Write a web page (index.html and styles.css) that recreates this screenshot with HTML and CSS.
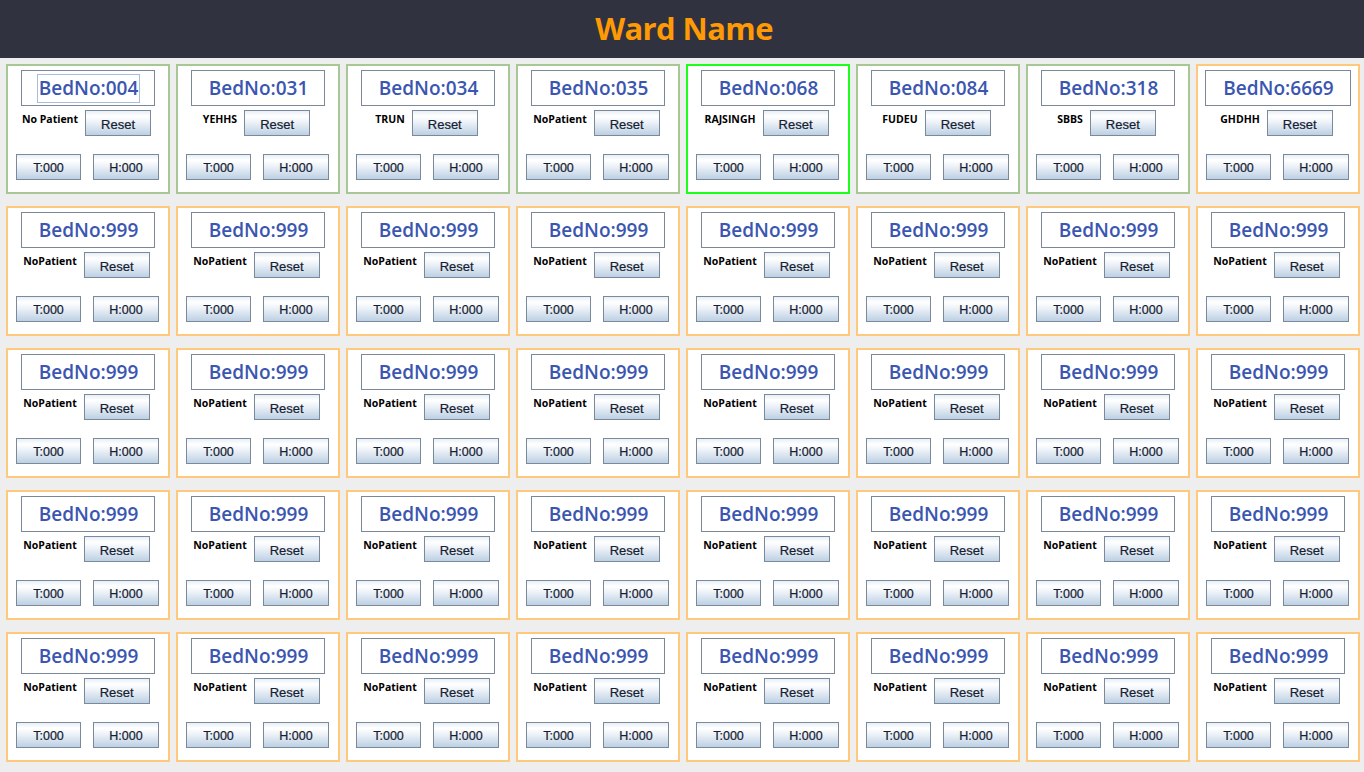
FILE: index.html
```html
<!DOCTYPE html>
<html>
<head>
<meta charset="utf-8">
<title>Ward Name</title>
<link rel="stylesheet" href="styles.css">
</head>
<body>
<header class="topbar"><h1 class="ward-title">Ward Name</h1></header>
<main class="grid">
  <div class="card ok"><div class="bed"><span class="bed-text focus">BedNo:004</span></div><div class="mid"><span class="patient">No Patient</span><button class="btn reset">Reset</button></div><div class="bottom"><button class="btn t">T:000</button><button class="btn h">H:000</button></div></div>
  <div class="card ok"><div class="bed"><span class="bed-text">BedNo:031</span></div><div class="mid"><span class="patient">YEHHS</span><button class="btn reset">Reset</button></div><div class="bottom"><button class="btn t">T:000</button><button class="btn h">H:000</button></div></div>
  <div class="card ok"><div class="bed"><span class="bed-text">BedNo:034</span></div><div class="mid"><span class="patient">TRUN</span><button class="btn reset">Reset</button></div><div class="bottom"><button class="btn t">T:000</button><button class="btn h">H:000</button></div></div>
  <div class="card ok"><div class="bed"><span class="bed-text">BedNo:035</span></div><div class="mid"><span class="patient">NoPatient</span><button class="btn reset">Reset</button></div><div class="bottom"><button class="btn t">T:000</button><button class="btn h">H:000</button></div></div>
  <div class="card active"><div class="bed"><span class="bed-text">BedNo:068</span></div><div class="mid"><span class="patient">RAJSINGH</span><button class="btn reset">Reset</button></div><div class="bottom"><button class="btn t">T:000</button><button class="btn h">H:000</button></div></div>
  <div class="card ok"><div class="bed"><span class="bed-text">BedNo:084</span></div><div class="mid"><span class="patient">FUDEU</span><button class="btn reset">Reset</button></div><div class="bottom"><button class="btn t">T:000</button><button class="btn h">H:000</button></div></div>
  <div class="card ok"><div class="bed"><span class="bed-text">BedNo:318</span></div><div class="mid"><span class="patient">SBBS</span><button class="btn reset">Reset</button></div><div class="bottom"><button class="btn t">T:000</button><button class="btn h">H:000</button></div></div>
  <div class="card warn"><div class="bed"><span class="bed-text">BedNo:6669</span></div><div class="mid"><span class="patient">GHDHH</span><button class="btn reset">Reset</button></div><div class="bottom"><button class="btn t">T:000</button><button class="btn h">H:000</button></div></div>

  <div class="card warn"><div class="bed"><span class="bed-text">BedNo:999</span></div><div class="mid"><span class="patient">NoPatient</span><button class="btn reset">Reset</button></div><div class="bottom"><button class="btn t">T:000</button><button class="btn h">H:000</button></div></div>
  <div class="card warn"><div class="bed"><span class="bed-text">BedNo:999</span></div><div class="mid"><span class="patient">NoPatient</span><button class="btn reset">Reset</button></div><div class="bottom"><button class="btn t">T:000</button><button class="btn h">H:000</button></div></div>
  <div class="card warn"><div class="bed"><span class="bed-text">BedNo:999</span></div><div class="mid"><span class="patient">NoPatient</span><button class="btn reset">Reset</button></div><div class="bottom"><button class="btn t">T:000</button><button class="btn h">H:000</button></div></div>
  <div class="card warn"><div class="bed"><span class="bed-text">BedNo:999</span></div><div class="mid"><span class="patient">NoPatient</span><button class="btn reset">Reset</button></div><div class="bottom"><button class="btn t">T:000</button><button class="btn h">H:000</button></div></div>
  <div class="card warn"><div class="bed"><span class="bed-text">BedNo:999</span></div><div class="mid"><span class="patient">NoPatient</span><button class="btn reset">Reset</button></div><div class="bottom"><button class="btn t">T:000</button><button class="btn h">H:000</button></div></div>
  <div class="card warn"><div class="bed"><span class="bed-text">BedNo:999</span></div><div class="mid"><span class="patient">NoPatient</span><button class="btn reset">Reset</button></div><div class="bottom"><button class="btn t">T:000</button><button class="btn h">H:000</button></div></div>
  <div class="card warn"><div class="bed"><span class="bed-text">BedNo:999</span></div><div class="mid"><span class="patient">NoPatient</span><button class="btn reset">Reset</button></div><div class="bottom"><button class="btn t">T:000</button><button class="btn h">H:000</button></div></div>
  <div class="card warn"><div class="bed"><span class="bed-text">BedNo:999</span></div><div class="mid"><span class="patient">NoPatient</span><button class="btn reset">Reset</button></div><div class="bottom"><button class="btn t">T:000</button><button class="btn h">H:000</button></div></div>

  <div class="card warn"><div class="bed"><span class="bed-text">BedNo:999</span></div><div class="mid"><span class="patient">NoPatient</span><button class="btn reset">Reset</button></div><div class="bottom"><button class="btn t">T:000</button><button class="btn h">H:000</button></div></div>
  <div class="card warn"><div class="bed"><span class="bed-text">BedNo:999</span></div><div class="mid"><span class="patient">NoPatient</span><button class="btn reset">Reset</button></div><div class="bottom"><button class="btn t">T:000</button><button class="btn h">H:000</button></div></div>
  <div class="card warn"><div class="bed"><span class="bed-text">BedNo:999</span></div><div class="mid"><span class="patient">NoPatient</span><button class="btn reset">Reset</button></div><div class="bottom"><button class="btn t">T:000</button><button class="btn h">H:000</button></div></div>
  <div class="card warn"><div class="bed"><span class="bed-text">BedNo:999</span></div><div class="mid"><span class="patient">NoPatient</span><button class="btn reset">Reset</button></div><div class="bottom"><button class="btn t">T:000</button><button class="btn h">H:000</button></div></div>
  <div class="card warn"><div class="bed"><span class="bed-text">BedNo:999</span></div><div class="mid"><span class="patient">NoPatient</span><button class="btn reset">Reset</button></div><div class="bottom"><button class="btn t">T:000</button><button class="btn h">H:000</button></div></div>
  <div class="card warn"><div class="bed"><span class="bed-text">BedNo:999</span></div><div class="mid"><span class="patient">NoPatient</span><button class="btn reset">Reset</button></div><div class="bottom"><button class="btn t">T:000</button><button class="btn h">H:000</button></div></div>
  <div class="card warn"><div class="bed"><span class="bed-text">BedNo:999</span></div><div class="mid"><span class="patient">NoPatient</span><button class="btn reset">Reset</button></div><div class="bottom"><button class="btn t">T:000</button><button class="btn h">H:000</button></div></div>
  <div class="card warn"><div class="bed"><span class="bed-text">BedNo:999</span></div><div class="mid"><span class="patient">NoPatient</span><button class="btn reset">Reset</button></div><div class="bottom"><button class="btn t">T:000</button><button class="btn h">H:000</button></div></div>

  <div class="card warn"><div class="bed"><span class="bed-text">BedNo:999</span></div><div class="mid"><span class="patient">NoPatient</span><button class="btn reset">Reset</button></div><div class="bottom"><button class="btn t">T:000</button><button class="btn h">H:000</button></div></div>
  <div class="card warn"><div class="bed"><span class="bed-text">BedNo:999</span></div><div class="mid"><span class="patient">NoPatient</span><button class="btn reset">Reset</button></div><div class="bottom"><button class="btn t">T:000</button><button class="btn h">H:000</button></div></div>
  <div class="card warn"><div class="bed"><span class="bed-text">BedNo:999</span></div><div class="mid"><span class="patient">NoPatient</span><button class="btn reset">Reset</button></div><div class="bottom"><button class="btn t">T:000</button><button class="btn h">H:000</button></div></div>
  <div class="card warn"><div class="bed"><span class="bed-text">BedNo:999</span></div><div class="mid"><span class="patient">NoPatient</span><button class="btn reset">Reset</button></div><div class="bottom"><button class="btn t">T:000</button><button class="btn h">H:000</button></div></div>
  <div class="card warn"><div class="bed"><span class="bed-text">BedNo:999</span></div><div class="mid"><span class="patient">NoPatient</span><button class="btn reset">Reset</button></div><div class="bottom"><button class="btn t">T:000</button><button class="btn h">H:000</button></div></div>
  <div class="card warn"><div class="bed"><span class="bed-text">BedNo:999</span></div><div class="mid"><span class="patient">NoPatient</span><button class="btn reset">Reset</button></div><div class="bottom"><button class="btn t">T:000</button><button class="btn h">H:000</button></div></div>
  <div class="card warn"><div class="bed"><span class="bed-text">BedNo:999</span></div><div class="mid"><span class="patient">NoPatient</span><button class="btn reset">Reset</button></div><div class="bottom"><button class="btn t">T:000</button><button class="btn h">H:000</button></div></div>
  <div class="card warn"><div class="bed"><span class="bed-text">BedNo:999</span></div><div class="mid"><span class="patient">NoPatient</span><button class="btn reset">Reset</button></div><div class="bottom"><button class="btn t">T:000</button><button class="btn h">H:000</button></div></div>

  <div class="card warn"><div class="bed"><span class="bed-text">BedNo:999</span></div><div class="mid"><span class="patient">NoPatient</span><button class="btn reset">Reset</button></div><div class="bottom"><button class="btn t">T:000</button><button class="btn h">H:000</button></div></div>
  <div class="card warn"><div class="bed"><span class="bed-text">BedNo:999</span></div><div class="mid"><span class="patient">NoPatient</span><button class="btn reset">Reset</button></div><div class="bottom"><button class="btn t">T:000</button><button class="btn h">H:000</button></div></div>
  <div class="card warn"><div class="bed"><span class="bed-text">BedNo:999</span></div><div class="mid"><span class="patient">NoPatient</span><button class="btn reset">Reset</button></div><div class="bottom"><button class="btn t">T:000</button><button class="btn h">H:000</button></div></div>
  <div class="card warn"><div class="bed"><span class="bed-text">BedNo:999</span></div><div class="mid"><span class="patient">NoPatient</span><button class="btn reset">Reset</button></div><div class="bottom"><button class="btn t">T:000</button><button class="btn h">H:000</button></div></div>
  <div class="card warn"><div class="bed"><span class="bed-text">BedNo:999</span></div><div class="mid"><span class="patient">NoPatient</span><button class="btn reset">Reset</button></div><div class="bottom"><button class="btn t">T:000</button><button class="btn h">H:000</button></div></div>
  <div class="card warn"><div class="bed"><span class="bed-text">BedNo:999</span></div><div class="mid"><span class="patient">NoPatient</span><button class="btn reset">Reset</button></div><div class="bottom"><button class="btn t">T:000</button><button class="btn h">H:000</button></div></div>
  <div class="card warn"><div class="bed"><span class="bed-text">BedNo:999</span></div><div class="mid"><span class="patient">NoPatient</span><button class="btn reset">Reset</button></div><div class="bottom"><button class="btn t">T:000</button><button class="btn h">H:000</button></div></div>
  <div class="card warn"><div class="bed"><span class="bed-text">BedNo:999</span></div><div class="mid"><span class="patient">NoPatient</span><button class="btn reset">Reset</button></div><div class="bottom"><button class="btn t">T:000</button><button class="btn h">H:000</button></div></div>
</main>
</body>
</html>
```

FILE: styles.css
```css
* { box-sizing: border-box; }

html, body {
  margin: 0;
  padding: 0;
  background: #eeeeee;
  width: 1364px;
  height: 772px;
  overflow: hidden;
  font-family: "Liberation Sans", Arial, sans-serif;
}

.topbar {
  height: 58px;
  background: #30333f;
  display: flex;
  align-items: center;
  justify-content: center;
}

.ward-title {
  margin: 0;
  font-family: "Open Sans", "DejaVu Sans", sans-serif;
  font-weight: 700;
  font-size: 31px;
  letter-spacing: -0.6px;
  line-height: 1;
  color: #ff9a05;
  padding-bottom: 2px;
  padding-left: 4px;
}

.grid {
  display: grid;
  grid-template-columns: repeat(8, 164px);
  grid-auto-rows: 130px;
  column-gap: 6px;
  row-gap: 12px;
  padding: 6px 4px 0 6px;
}

.card {
  background: #ffffff;
  border: 2px solid #a7c796;
  display: flex;
  flex-direction: column;
  align-items: center;
  padding-top: 4px;
}

.card.ok { border-color: #a7c796; }
.card.warn { border-color: #fec97d; }
.card.active { border-color: #1cff1c; }

.bed {
  height: 36px;
  border: 1px solid #7b8898;
  padding: 3px 14px 2px 15px;
  display: flex;
  align-items: stretch;
  justify-content: center;
}

.bed-text {
  display: flex;
  align-items: center;
  border: 1px solid transparent;
  padding: 0 1px 1px;
  font-family: "Open Sans", "DejaVu Sans", sans-serif;
  font-weight: 600;
  font-size: 19px;
  color: #3a56b0;
  white-space: nowrap;
}

.bed-text.focus { border-color: #a7bcd8; }

.mid {
  margin-top: 4px;
  display: flex;
  align-items: flex-start;
  justify-content: center;
  gap: 7px;
  padding-right: 3px;
}

.patient {
  font-family: "Open Sans", "DejaVu Sans", sans-serif;
  font-weight: 700;
  font-size: 10.5px;
  line-height: 14px;
  padding-top: 2px;
  color: #000000;
  white-space: nowrap;
}

.btn {
  height: 26px;
  margin: 0;
  padding: 1px 0 0;
  border: 1px solid #7a8a9b;
  border-radius: 0;
  background: linear-gradient(to bottom, #e8eff6 0%, #ffffff 22%, #eef3f9 45%, #d3e0ed 75%, #bdd0e4 100%);
  font-family: "Liberation Sans", Arial, sans-serif;
  font-size: 12.5px;
  color: #142030;
  display: flex;
  align-items: center;
  justify-content: center;
  -webkit-text-stroke: 0.2px #142030;
}

.btn.reset { width: 66px; font-size: 13px; padding-top: 2px; }

.bottom {
  margin-top: 18px;
  display: flex;
  gap: 12px;
  padding-right: 1px;
}

.btn.t { width: 65px; }
.btn.h { width: 66px; }
```
